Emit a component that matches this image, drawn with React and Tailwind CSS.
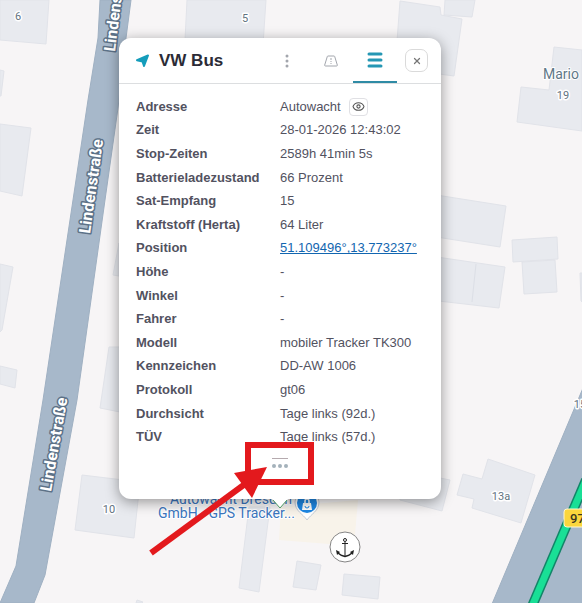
import { Eye, X } from 'lucide-react';

const rows = [
  { label: 'Adresse', value: 'Autowacht', preview: true },
  { label: 'Zeit', value: '28-01-2026 12:43:02' },
  { label: 'Stop-Zeiten', value: '2589h 41min 5s' },
  { label: 'Batterieladezustand', value: '66 Prozent' },
  { label: 'Sat-Empfang', value: '15' },
  { label: 'Kraftstoff (Herta)', value: '64 Liter' },
  { label: 'Position', value: '51.109496°,13.773237°', link: true },
  { label: 'Höhe', value: '-' },
  { label: 'Winkel', value: '-' },
  { label: 'Fahrer', value: '-' },
  { label: 'Modell', value: 'mobiler Tracker TK300' },
  { label: 'Kennzeichen', value: 'DD-AW 1006' },
  { label: 'Protokoll', value: 'gt06' },
  { label: 'Durchsicht', value: 'Tage links (92d.)' },
  { label: 'TÜV', value: 'Tage links (57d.)' },
];

const buildings = [
  '0,0 49,0 46,44 0,40',
  '0,70 4,71 1,96 0,96',
  '0,124 31,128 22,196 0,191',
  '0,264 13,267 2,330 0,332',
  '0,366 17,370 15,388 0,384',
  '187,0 266,0 262,60 184,60',
  '400,1 440,7 441,15 462,19 454,76 395,68',
  '445,0 475,0 472,17 444,15',
  '554,47 582,50 582,131 517,122 521,87 549,90',
  '430,194 506,206 500,247 430,236',
  '430,256 505,267 499,308 430,300',
  '512,240 557,237 558,259 513,262',
  '522,262 555,260 557,292 524,294',
  '580,273 582,273 582,302 581,301',
  '119,243 119,276 113,275',
  '109,347 125,347 125,413 100,408',
  '82,475 140,482 134,538 75,530',
  '488,459 535,475 521,523 472,508 474,499 457,495 463,474 482,479',
  '400,470 450,480 442,511 400,500',
  '249,507 270,507 259,592 239,588',
  '297,561 321,565 316,590 293,587',
  '344,574 380,577 378,599 342,595',
  '137,600 143,602 142,603 136,603',
];

const streets = [
  { x: 115, y: 52, angle: -83 },
  { x: 90, y: 234, angle: -82 },
  { x: 51, y: 492, angle: -80 },
];

const houses = [
  { x: 18, y: 20, text: '6' },
  { x: 245, y: 22, text: '5' },
  { x: 563, y: 99, text: '19' },
  { x: 109, y: 513, text: '10' },
  { x: 501, y: 500, text: '13a' },
  { x: 580, y: 408, text: '15' },
];

function MapCanvas() {
  return (
    <svg className="absolute inset-0 h-full w-full font-['Roboto',sans-serif]" aria-hidden="true">
      <polygon points="281,507 358,500 354,546 279,540" fill="#f8f3ea" />
      <g fill="#e8eaef" stroke="#e1e3e9" strokeWidth="1">
        {buildings.map((points) => (
          <polygon key={points} points={points} />
        ))}
      </g>
      <path d="M476 264L472 302" stroke="#dcdfe6" fill="none" />

      {/* roads */}
      <path
        d="M100 0L98 38L88 100L73 200L43 400L16 566L0 603H34L45 575L77 400L105 200L118 108L126 38L131 0Z"
        fill="#a7b8ca"
        stroke="#9fb0c2"
      />
      <path d="M583 388L492 604H583Z" fill="#a7b8ca" stroke="#9fb0c2" />
      <path d="M586 480L530 611" stroke="#128568" strokeWidth="10" />
      <path d="M586 480L530 611" stroke="#19df96" strokeWidth="7" />

      <g fontSize="16" fontWeight="700" fill="#fff" stroke="#5c7187" strokeWidth="3" strokeLinejoin="round" paintOrder="stroke">
        {streets.map((s) => (
          <text key={s.y} transform={`translate(${s.x} ${s.y}) rotate(${s.angle})`}>
            Lindenstraße
          </text>
        ))}
      </g>

      <g fontSize="11" fill="#62737f" stroke="#fff" strokeWidth="3" strokeLinejoin="round" paintOrder="stroke" textAnchor="middle">
        {houses.map((h) => (
          <text key={h.text} x={h.x} y={h.y}>
            {h.text}
          </text>
        ))}
      </g>
      <text x="543" y="79" fontSize="14" fill="#5f7888" stroke="#fff" strokeWidth="2" paintOrder="stroke">
        Mario
      </text>

      <rect x="564" y="509" width="40" height="18" rx="3" fill="#fbd63c" stroke="#fff6cf" />
      <text x="570" y="523" fontSize="13" fontWeight="500" fill="#3b3620">
        97
      </text>

      <g fontSize="14" fill="#3b76c0" stroke="#fff" strokeWidth="2" strokeLinejoin="round" paintOrder="stroke">
        <text x="170" y="504">Autowacht Dresden</text>
        <text x="158" y="518">GmbH - GPS Tracker...</text>
      </g>

      {/* shop pin */}
      <path d="M307 520C303 514 295 511 295 502A12 12 0 0 1 319 502C319 511 311 514 307 520Z" fill="#fff" stroke="#c3cbd4" />
      <circle cx="307" cy="503" r="10" fill="#1e88e5" />
      <path d="M305 503V501a2 2 0 0 1 4 0V503" fill="none" stroke="#fff" strokeWidth="1.500" />
      <path d="M303 503H311L312 510H302Z" fill="#fff" />
      <path d="M305 506a2 2 0 0 0 4 0" fill="none" stroke="#1e88e5" />

      {/* anchor marker */}
      <circle cx="345" cy="547" r="15" fill="#fff" stroke="#858585" />
      <g fill="none" stroke="#222" strokeWidth="1">
        <circle cx="345" cy="540" r="1.500" />
        <path d="M345 542V556M342 543.500H348" />
        <path d="M338 553C340 555 343 556 345 556.500C347 556 350 555 352 553" strokeWidth="1.500" />
      </g>
      <path d="M336 550L340 552L337 555ZM354 550L350 552L353 555Z" fill="#222" />
    </svg>
  );
}

function NavigationIcon() {
  return (
    <svg className="h-4 w-4 shrink-0" viewBox="0 0 16 16" aria-hidden="true">
      <path d="M13 2.500L9 13L7.500 8.500L2 7.200Z" fill="#159dbb" stroke="#159dbb" strokeWidth="2" strokeLinejoin="round" />
    </svg>
  );
}

function RoadIcon() {
  return (
    <svg width="14" height="12" viewBox="0 0 14 12" fill="none" stroke="#a3a6ad" aria-hidden="true">
      <path d="M4 1H10Q10.500 1 10.700 1.500L13.300 10Q13.500 11 12.500 11H1.500Q.5 11 .7 10L3.300 1.500Q3.500 1 4 1Z" />
      <path d="M7 3V5M7 6V7M7 8V9" />
    </svg>
  );
}

function Header() {
  return (
    <header className="flex h-[46px] border-b border-[#dcdee0] pl-4 pr-[13px]">
      <div className="flex flex-1 items-center gap-2">
        <NavigationIcon />
        <h1 className="text-[17px] font-bold text-[#2b2b36]">VW Bus</h1>
      </div>
      <nav className="flex">
        <button type="button" aria-label="Mehr" className="flex w-11 items-center justify-center">
          <svg width="4" height="14" fill="#a3a6ad" aria-hidden="true">
            <circle cx="2" cy="2" r="1.500" />
            <circle cx="2" cy="7" r="1.500" />
            <circle cx="2" cy="12" r="1.500" />
          </svg>
        </button>
        <button type="button" aria-label="Route" className="flex w-11 items-center justify-center">
          <RoadIcon />
        </button>
        <button type="button" aria-label="Details" className="flex w-11 items-center justify-center border-b-2 border-[#2f8ba5]">
          <svg width="16" height="16" stroke="#2597b4" strokeWidth="3" strokeLinecap="round" aria-hidden="true">
            <path d="M2 2H14M2 8H14M2 14H14" />
          </svg>
        </button>
      </nav>
      <button
        type="button"
        aria-label="Schließen"
        className="ml-2 flex h-[23px] w-[23px] items-center justify-center self-center rounded-[7px] border border-[#dadada] text-[#777]"
      >
        <X size={10} strokeWidth={3} />
      </button>
    </header>
  );
}

function DetailRow({ row }) {
  return (
    <tr>
      <th scope="row" className="w-36 p-0 text-left font-bold">
        {row.label}
      </th>
      <td className="p-0">
        {row.link ? (
          <a href="#position" className="text-[#1266b0] underline">
            {row.value}
          </a>
        ) : row.preview ? (
          <div className="flex h-4 items-center gap-2">
            {row.value}
            <button
              type="button"
              aria-label="Adresse anzeigen"
              className="flex h-[18px] w-[19px] items-center justify-center rounded border border-[#e0e0e4] text-[#555]"
            >
              <Eye size={13} />
            </button>
          </div>
        ) : (
          row.value
        )}
      </td>
    </tr>
  );
}

export default function App() {
  return (
    <main className="relative min-h-screen overflow-hidden bg-[#f7f5f6] pt-[38px] pl-[119px] font-['Liberation_Sans',Arial,sans-serif]">
      <MapCanvas />

      <section className="relative w-[322px] rounded-xl bg-white shadow-[0_3px_14px_rgba(0,0,0,0.4)]">
        <Header />
        <div className="px-[17px] pt-[11px]">
          <table className="h-[354px] w-full border-collapse text-[13px] leading-4 text-[#52525f]">
            <tbody>
              {rows.map((row) => (
                <DetailRow key={row.label} row={row} />
              ))}
            </tbody>
          </table>
        </div>
        <div className="flex h-[50px] justify-center pt-2">
          <button type="button" aria-label="Mehr anzeigen" className="h-3 w-4">
            <svg width="16" height="11" fill="#a4b2bb" aria-hidden="true">
              <path d="M0 .5H16" stroke="#b5aaae" />
              <circle cx="2" cy="8" r="2" />
              <circle cx="8" cy="8" r="2" />
              <circle cx="14" cy="8" r="2" />
            </svg>
          </button>
        </div>
      </section>

      {/* popup tip and highlight lie over the card */}
      <svg className="pointer-events-none absolute inset-0 h-full w-full" aria-hidden="true">
        <path d="M271 498L280 508L289 498Z" fill="#fff" />
        <path d="M273 500L280 508L287 500" fill="none" stroke="#4d9a62" />
        <rect x="248" y="445" width="63" height="37" fill="none" stroke="#e3191d" strokeWidth="6" />
        <path d="M151 553L245 484" stroke="#e3191d" strokeWidth="6" />
        <polygon points="267,467 234,473 252,498" fill="#e3191d" />
      </svg>
    </main>
  );
}
